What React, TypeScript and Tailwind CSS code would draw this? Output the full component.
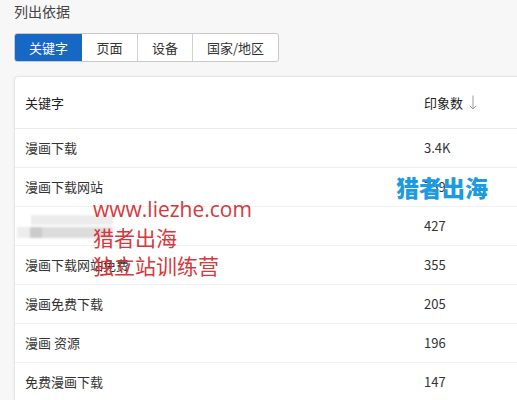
const TABS = ['关键字', '页面', '设备', '国家/地区']

const ROWS = [
  { key: '漫画下载', value: '3.4K' },
  { key: '漫画下载网站', value: '759' },
  { key: '', value: '427', blurred: true },
  { key: '漫画下载网站免费', value: '355' },
  { key: '漫画免费下载', value: '205' },
  { key: '漫画 资源', value: '196' },
  { key: '免费漫画下载', value: '147' },
]

export default function App() {
  return (
    <div
      className="relative h-[400px] w-[517px] overflow-hidden bg-[#f7f7f7] text-[#333]"
      style={{ fontFamily: '"Noto Sans CJK SC", "Noto Sans", sans-serif' }}
    >
      <div className="pl-[14px] pt-[1px] text-[14px] leading-[20px] text-[#444]">列出依据</div>

      <div className="ml-[14px] mt-[12px] flex h-[29px] w-fit overflow-hidden rounded-[3px] border border-[#c9c9c9] bg-white text-[13px]">
        {TABS.map((t, i) => (
          <div
            key={t}
            className={`flex items-center justify-center ${
              i === 0 ? 'w-[67px] bg-[#1767c4] text-white' : 'border-l border-[#d0d0d0] text-[#333]'
            } ${i === 1 ? 'w-[55px] border-l-0' : ''} ${i === 2 ? 'w-[55px]' : ''} ${i === 3 ? 'w-[86px]' : ''}`}
          >
            {t}
          </div>
        ))}
      </div>

      <div className="ml-[14px] mt-[14px] w-[540px] rounded-[4px] border border-[#e6e6e6] bg-white shadow-[0_0_3px_rgba(0,0,0,0.06)]">
        <div className="flex h-[52px] items-center border-b border-[#ececec] text-[13px] text-[#222]">
          <div className="w-[409px] pl-[10px]">关键字</div>
          <div className="flex items-center gap-[6px]">
            印象数
            <svg width="8" height="15" viewBox="0 0 8 15" fill="none" stroke="#9a9a9a" strokeWidth="1">
              <path d="M4 0.5V14M0.8 10.8L4 14L7.2 10.8" />
            </svg>
          </div>
        </div>
        {ROWS.map((r, i) => (
          <div key={i} className="flex h-[39px] items-center border-b border-[#f0f0f0] text-[13px] text-[#333]">
            <div className="w-[409px] pl-[10px]">
              {r.blurred ? (
                <div className="-ml-[8px] flex flex-col gap-[2px]">
                  <div className="ml-[14px] h-[10px] w-[82px] bg-[#ececec] blur-[1px]" />
                  <div className="flex h-[11px] blur-[1px]">
                    <div className="w-[13px] bg-[#ededed]" />
                    <div className="w-[12px] bg-[#cbcbcb]" />
                    <div className="w-[71px] bg-[#dcdcdc]" />
                  </div>
                </div>
              ) : (
                r.key
              )}
            </div>
            <div>{r.value}</div>
          </div>
        ))}
      </div>

      <div className="pointer-events-none absolute left-[93px] top-[195px] flex flex-col text-[21px] leading-[28px] text-[#d8373b]">
        <span className="text-[21px]" style={{ fontFamily: '"Open Sans", sans-serif' }}>
          www.liezhe.com
        </span>
        <span>猎者出海</span>
        <span>独立站训练营</span>
      </div>

      <div className="pointer-events-none absolute left-[396px] top-[172px] text-[23px] font-black leading-[30px] text-[#1c9be3]">
        猎者出海
      </div>
    </div>
  )
}
